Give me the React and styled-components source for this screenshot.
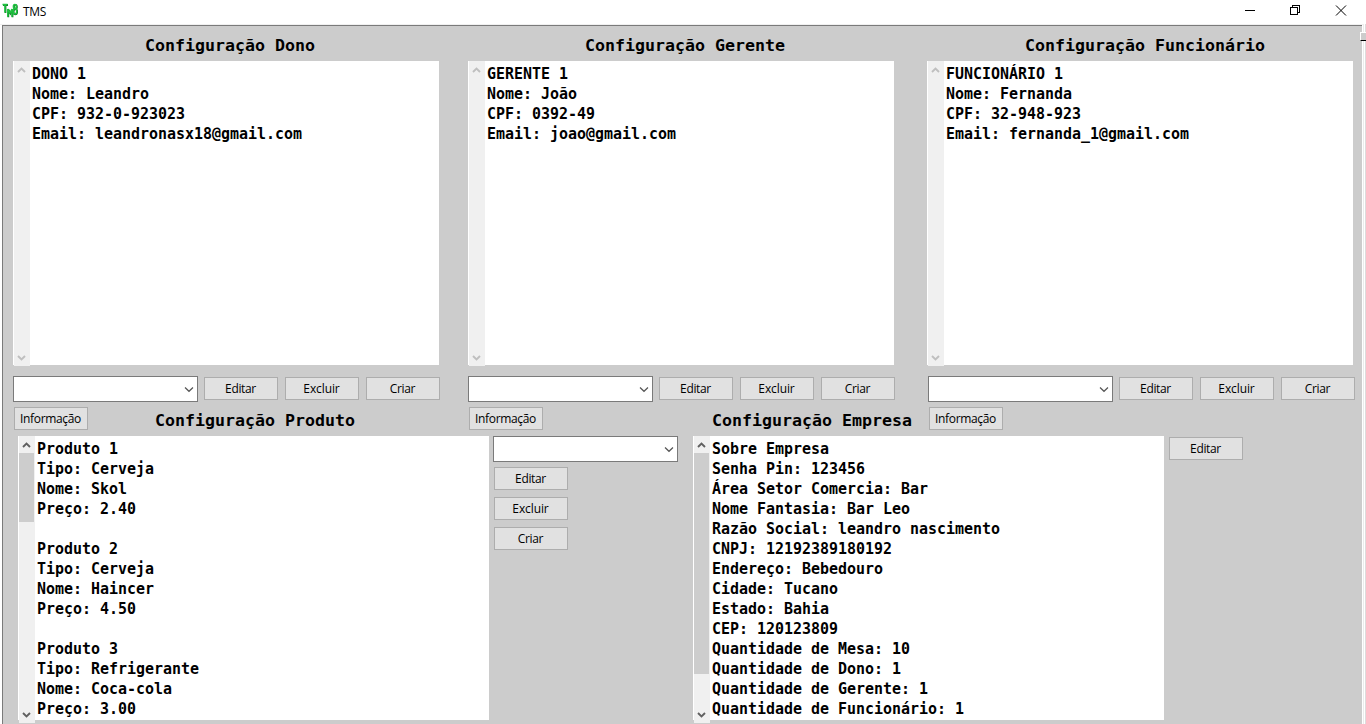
import React from "react";
import styled, { createGlobalStyle } from "styled-components";

const Global = createGlobalStyle`
  * { box-sizing: border-box; }
  body { margin: 0; background: #fff; overflow: hidden; }
`;

const ui = `"Open Sans", "Noto Sans", sans-serif`;
const mono = `"DejaVu Sans Mono", monospace`;

const Window = styled.div`
  position: relative;
  display: flex;
  flex-direction: column;
  width: 1366px;
  height: 724px;
  overflow: hidden;
  background: #fff;
  color: #000;
`;
const TitleBar = styled.header`
  display: flex;
  flex: none;
  height: 25px;
  padding-left: 2px;
  border-bottom: 1px solid #f0f0f0;
`;
const Logo = styled.svg`
  margin-top: 3px;
  flex: none;
`;
const AppName = styled.span`
  flex: 1;
  margin-left: 5px;
  font: 12px/23px ${ui};
  letter-spacing: -0.35px;
`;
const Controls = styled.div`
  display: flex;
`;
const Control = styled.svg`
  width: 46px;
  height: 21px;
  fill: none;
  stroke: #000;
  shape-rendering: ${(p) => (p.$smooth ? "auto" : "crispEdges")};
`;
const Client = styled.main`
  flex: 1;
  min-height: 0;
  width: 1360px;
  margin-left: 2px;
  padding-left: 10px;
  background: #ccc;
  border-top: 1px solid #7a7a7a;
  border-left: 1px solid #7a7a7a;
`;
const EdgeStrip = styled.div`
  position: absolute;
  right: 0;
  top: 24px;
  bottom: 0;
  width: 3px;
  background: #fff;
  border-left: 1px solid #ececec;
  border-right: 1px solid #dcdcdc;
`;
const EdgeHandle = styled.div`
  position: absolute;
  right: 0;
  top: 32px;
  width: 6px;
  height: 9px;
  background: #ccc;
  border-top: 1px solid #fff;
  border-left: 1px solid #fff;
  border-bottom: 1px solid #000;
`;
const People = styled.div`
  display: flex;
`;
const Person = styled.section`
  width: 427px;
  margin-right: ${(p) => p.$after || 0}px;
`;
const Heading = styled.h2`
  margin: 0;
  height: 35px;
  padding-left: ${(p) => p.$indent}px;
  font: bold 16.61px/40px ${mono};
  white-space: pre;
`;
const ListBox = styled.div`
  display: flex;
  width: ${(p) => p.$w}px;
  height: ${(p) => p.$h}px;
  background: #fff;
  padding-left: 1px;
`;
const Bar = styled.div`
  display: flex;
  flex: none;
  flex-direction: column;
  width: 16px;
  height: ${(p) => p.$h}px;
  background: #f0f0f0;
`;
const Thumb = styled.div`
  width: 15px;
  height: ${(p) => p.$h}px;
  background: #cdcdcd;
`;
const Arrow = styled.svg`
  width: 16px;
  height: 17px;
  flex: none;
  margin-top: ${(p) => (p.$end ? "auto" : 0)};
  fill: none;
  stroke: ${(p) => (p.$off ? "#bfbfbf" : "#606060")};
  stroke-width: 1.9;
`;
const Lines = styled.pre`
  margin: 0;
  padding: 3px 0 0 2px;
  font: bold 14.96px/20px ${mono};
`;
const Actions = styled.div`
  display: flex;
  gap: 7px;
  margin-top: 11px;
  height: 26px;
  padding-left: ${(p) => p.$indent || 0}px;
`;
const Combo = styled.div`
  display: flex;
  flex: none;
  align-items: center;
  justify-content: flex-end;
  width: 185px;
  height: 26px;
  padding-right: 3px;
  margin-right: ${(p) => (p.$inline ? -1 : 0)}px;
  background: #fff;
  border: 1px solid #7a7a7a;
`;
const Button = styled.button`
  flex: none;
  width: 74px;
  height: 23px;
  padding: 0 1px 0 0;
  margin-top: ${(p) => (p.$inline ? 1 : 0)}px;
  background: #e1e1e1;
  border: 1px solid #adadad;
  color: #000;
  font: 12px/20px ${ui};
  letter-spacing: ${(p) => p.$track ?? -0.35}px;
`;
const Middle = styled.div`
  display: flex;
  height: 34px;
  padding: 5px 0 0 1px;
`;
const MiddleHeading = styled.h2`
  margin: 0 0 0 ${(p) => p.$before}px;
  width: ${(p) => p.$w}px;
  font: bold 16.61px/27px ${mono};
  white-space: pre;
`;
const Bottom = styled.div`
  display: flex;
  padding-left: 5px;
`;
const Side = styled.div`
  display: flex;
  flex-direction: column;
  width: ${(p) => p.$w}px;
  padding-left: 4px;
`;
const Stack = styled.div`
  display: flex;
  flex-direction: column;
  gap: 7px;
  padding: ${(p) => p.$top}px 0 0 1px;
`;

function Scroll({ h, thumb }) {
  return (
    <Bar $h={h}>
      <Arrow $off={!thumb} viewBox="0 0 16 17">
        <path d="M4 11 L7.5 7.5 L11 11" />
      </Arrow>
      {thumb && <Thumb $h={thumb} />}
      <Arrow $end $off={!thumb} viewBox="0 0 16 17">
        <path d="M4 7 L7.5 10.5 L11 7" />
      </Arrow>
    </Bar>
  );
}

function Select({ inline }) {
  return (
    <Combo $inline={inline}>
      <svg width="10" height="8" viewBox="0 0 10 8" fill="none" stroke="#555" strokeWidth="1.2">
        <path d="M1 2.5 L5 6.3 L9 2.5" />
      </svg>
    </Combo>
  );
}

function LogoLetters() {
  return (
    <>
      <path d="M0.5 1.5H5.5M3 1.5V9.5" />
      <path d="M5.8 13.8V6L7.9 10L10 6V13.8" />
      <ellipse cx="12.9" cy="3.4" rx="1.5" ry="2" />
      <ellipse cx="12.9" cy="8.2" rx="1.8" ry="2.6" />
    </>
  );
}

const people = [
  { title: "Configuração Dono", indent: 132, after: 28, text: "DONO 1\nNome: Leandro\nCPF: 932-0-923023\nEmail: leandronasx18@gmail.com" },
  { title: "Configuração Gerente", indent: 117, after: 32, text: "GERENTE 1\nNome: João\nCPF: 0392-49\nEmail: joao@gmail.com" },
  { title: "Configuração Funcionário", indent: 98, after: 0, shift: 1, text: "FUNCIONÁRIO 1\nNome: Fernanda\nCPF: 32-948-923\nEmail: fernanda_1@gmail.com" },
];

const products = `Produto 1
Tipo: Cerveja
Nome: Skol
Preço: 2.40

Produto 2
Tipo: Cerveja
Nome: Haincer
Preço: 4.50

Produto 3
Tipo: Refrigerante
Nome: Coca-cola
Preço: 3.00`;

const company = `Sobre Empresa
Senha Pin: 123456
Área Setor Comercia: Bar
Nome Fantasia: Bar Leo
Razão Social: leandro nascimento
CNPJ: 12192389180192
Endereço: Bebedouro
Cidade: Tucano
Estado: Bahia
CEP: 120123809
Quantidade de Mesa: 10
Quantidade de Dono: 1
Quantidade de Gerente: 1
Quantidade de Funcionário: 1`;

export default function App() {
  return (
    <Window>
      <Global />
      <TitleBar>
        <Logo width="16" height="16" viewBox="0 0 16 16" fill="none">
          <g stroke="#137a2a" strokeWidth="1.8" transform="translate(0.5 0.5)">
            <LogoLetters />
          </g>
          <g stroke="#1fc440" strokeWidth="1.5">
            <LogoLetters />
          </g>
        </Logo>
        <AppName>TMS</AppName>
        <Controls>
          <Control viewBox="0 0 46 21"><path d="M17 10.5H27" /></Control>
          <Control viewBox="0 0 46 21"><path d="M16.5 7.5H23.5V14.5H16.5ZM18.5 7V5.5H25.5V12.5H24" /></Control>
          <Control $smooth viewBox="0 0 46 21"><path d="M16 5.5L26 15.5M26 5.5L16 15.5" /></Control>
        </Controls>
      </TitleBar>
      <Client>
        <People>
          {people.map((p) => (
            <Person key={p.title} $after={p.after}>
              <Heading $indent={p.indent}>{p.title}</Heading>
              <ListBox $w={426} $h={304}>
                <Scroll h={305} />
                <Lines>{p.text}</Lines>
              </ListBox>
              <Actions $indent={p.shift}>
                <Select inline />
                <Button $inline>Editar</Button>
                <Button $inline $track={-0.1}>Excluir</Button>
                <Button $inline>Criar</Button>
              </Actions>
            </Person>
          ))}
        </People>
        <Middle>
          <Button>Informação</Button>
          <MiddleHeading $before={67} $w={314}>Configuração Produto</MiddleHeading>
          <Button>Informação</Button>
          <MiddleHeading $before={169} $w={217}>Configuração Empresa</MiddleHeading>
          <Button>Informação</Button>
        </Middle>
        <Bottom>
          <ListBox $w={471} $h={284}>
            <Scroll h={287} thumb={69} />
            <Lines>{products}</Lines>
          </ListBox>
          <Side $w={204}>
            <Select />
            <Stack $top={5}>
              <Button>Editar</Button>
              <Button $track={-0.1}>Excluir</Button>
              <Button>Criar</Button>
            </Stack>
          </Side>
          <ListBox $w={471} $h={284}>
            <Scroll h={287} thumb={221} />
            <Lines>{company}</Lines>
          </ListBox>
          <Side $w={90}>
            <Stack $top={1}>
              <Button>Editar</Button>
            </Stack>
          </Side>
        </Bottom>
      </Client>
      <EdgeStrip />
      <EdgeHandle />
    </Window>
  );
}
